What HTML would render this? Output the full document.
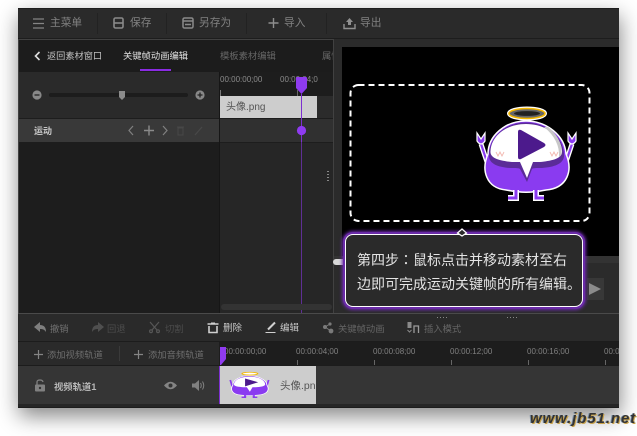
<!DOCTYPE html>
<html><head><meta charset="utf-8"><style>
html,body{margin:0;padding:0;background:#fff}
#p{position:relative;width:637px;height:436px;overflow:hidden;background:#fff;font-family:"Liberation Sans","Noto Sans CJK SC",sans-serif}
#p div,#p span.a{position:absolute}
.t{position:absolute;white-space:nowrap;line-height:12px;font-size:9.3px;color:#8a8a8a}
.tb{font-size:10.7px;color:#828282;top:17px}
.bt{top:323px;font-size:9.3px}
svg{position:absolute;overflow:visible}
#c{left:0;top:0;width:637px;height:436px;filter:blur(.3px)}
</style></head><body><div id="p">
<div style="left:18px;top:8px;width:601px;height:400px;background:#2b2b2b;box-shadow:1px 8px 20px rgba(0,0,0,.48)"></div>
<div id="c">
<!-- top toolbar -->
<div style="left:18px;top:8px;width:601px;height:31px;background:#2a2a2a;border-top:1px solid #1e1e1e;box-sizing:border-box"></div>
<div style="left:18px;top:38px;width:601px;height:1px;background:#1d1d1d"></div>
<div style="left:97px;top:13px;width:1px;height:21px;background:#222"></div>
<div style="left:166px;top:13px;width:1px;height:21px;background:#222"></div>
<div style="left:246px;top:13px;width:1px;height:21px;background:#222"></div>
<div style="left:326px;top:13px;width:1px;height:21px;background:#222"></div>
<svg style="left:33px;top:18px" width="12" height="11" stroke="#858585" stroke-width="1.3" fill="none"><path d="M0 1H11M0 5.500H11M0 10H11"/></svg>
<span class="t tb" style="left:50px">主菜单</span>
<svg style="left:113px;top:17px" width="12" height="13" stroke="#8a8a8a" stroke-width="1.6" fill="none"><rect x="1" y="1" width="9" height="10" rx="1.500"/><path d="M1 6H10"/></svg>
<span class="t tb" style="left:130px">保存</span>
<svg style="left:182px;top:17px" width="13" height="13" stroke="#8a8a8a" stroke-width="1.500" fill="none"><rect x="1" y="1" width="10" height="10" rx="1.500"/><path d="M1 4H11M3 7.500H9"/></svg>
<span class="t tb" style="left:199px">另存为</span>
<svg style="left:268px;top:18px" width="11" height="11" stroke="#8e8e8e" stroke-width="1.400" fill="none"><path d="M5.500 0V10M0.500 5H10.500"/></svg>
<span class="t tb" style="left:284px">导入</span>
<svg style="left:343px;top:17px" width="13" height="13" fill="#909090"><path d="M6.500 1L10 5H8V8H5V5H3Z"/><path d="M1 7V11.500H12V7" fill="none" stroke="#909090" stroke-width="1.400"/></svg>
<span class="t tb" style="left:360px">导出</span>
<!-- left panel -->
<div style="left:18px;top:39px;width:316px;height:275px;background:#252525;border:1px solid #414141;box-sizing:border-box"></div>
<div style="left:19px;top:40px;width:314px;height:32px;background:#1c1c1c"></div>
<svg style="left:34px;top:51px" width="7" height="10" stroke="#dcdcdc" stroke-width="1.600" fill="none"><path d="M5.500 1L1.500 5L5.500 9"/></svg>
<span class="t" style="left:47px;top:50px;color:#c4c4c4;font-size:9.200px">返回素材窗口</span>
<span class="t" style="left:123px;top:50px;color:#e0e0e0">关键帧动画编辑</span>
<div style="left:140px;top:69px;width:31px;height:2px;background:#8a2be2"></div>
<span class="t" style="left:220px;top:50px;color:#666">模板素材编辑</span>
<span class="t" style="left:322px;top:50px;color:#666;width:11px;overflow:hidden">属性</span>
<!-- slider -->
<div style="left:19px;top:72px;width:201px;height:46px;background:#2a2a2a"></div>
<div style="left:49px;top:93px;width:139px;height:4px;background:#1c1c1c;border-radius:2px"></div>
<svg style="left:32px;top:90px" width="10" height="10"><circle cx="5" cy="5" r="4.600" fill="#888"/><path d="M2.500 5H7.500" stroke="#222" stroke-width="1.300"/></svg>
<svg style="left:195px;top:90px" width="10" height="10"><circle cx="5" cy="5" r="4.600" fill="#888"/><path d="M2.500 5H7.500M5 2.500V7.500" stroke="#222" stroke-width="1.300"/></svg>
<svg style="left:119px;top:91px" width="6" height="9"><path d="M0 0H6V6L3 9L0 6Z" fill="#8b8b8b"/></svg>
<!-- motion row -->
<div style="left:19px;top:119px;width:201px;height:23px;background:#393939"></div>
<div style="left:19px;top:118px;width:314px;height:1px;background:#1d1d1d"></div>
<div style="left:19px;top:142px;width:314px;height:1px;background:#1d1d1d"></div>
<span class="t" style="left:34px;top:125px;color:#c8c8c8;font-weight:bold;font-size:9px">运动</span>
<svg style="left:128px;top:125px" width="80" height="11" fill="none"><path d="M5 1L1 5.500L5 10" stroke="#808080" stroke-width="1.200"/><path d="M16 5.500H26M21 .5V10.500" stroke="#8a8a8a" stroke-width="1.400"/><path d="M35 1L39 5.500L35 10" stroke="#808080" stroke-width="1.200"/><path d="M50 3H55V10H50ZM49 2H56" stroke="#484848" stroke-width="1"/><path d="M67 10L74 2" stroke="#484848" stroke-width="1.200"/></svg>
<div style="left:19px;top:143px;width:201px;height:170px;background:#1d1d1d"></div>
<!-- keyframe timeline -->
<div style="left:220px;top:72px;width:113px;height:24px;background:#1d1d1d"></div>
<div style="left:220px;top:96px;width:113px;height:22px;background:#2b2b2b"></div>
<div style="left:220px;top:119px;width:113px;height:23px;background:#303030"></div>
<div style="left:220px;top:143px;width:113px;height:170px;background:#262626"></div>
<div style="left:219px;top:72px;width:1px;height:241px;background:#161616"></div>
<span class="t" style="left:220px;top:74px;font-size:8px;color:#8a8a8a;width:113px;overflow:hidden;height:12px">00:00:00;00&nbsp;&nbsp;&nbsp;&nbsp;&nbsp;&nbsp;&nbsp;&nbsp;00:00:04;0</span>
<div style="left:220px;top:90px;width:1px;height:6px;background:#777"></div>
<div style="left:297px;top:90px;width:1px;height:6px;background:#666"></div>
<div style="left:220px;top:96px;width:97px;height:22px;background:#cdcdcd"></div>
<span class="t" style="left:226px;top:102px;color:#555;font-size:10px">头像.png</span>
<div style="left:301px;top:94px;width:1px;height:219px;background:#7d2fd0"></div>
<div style="left:301px;top:142px;width:1px;height:171px;background:#5f2f94"></div>
<svg style="left:295px;top:77px" width="13" height="18"><path d="M1 1Q1 0 2 0H11Q12 0 12 1V11L6.500 17L1 11Z" fill="#8f3bf0"/></svg>
<svg style="left:296px;top:125px" width="11" height="11"><circle cx="5.500" cy="5.500" r="4.600" fill="#8f3bf0"/></svg>
<div style="left:221px;top:304px;width:111px;height:6px;background:#333;border-radius:3px"></div>
<div style="left:327px;top:171px;width:2px;height:12px;background:repeating-linear-gradient(#888 0 1px,transparent 1px 3px)"></div>
<!-- preview -->
<div style="left:334px;top:39px;width:285px;height:275px;background:#2b2b2b"></div>
<div style="left:342px;top:47px;width:277px;height:209px;background:#000"></div>
<div style="left:334px;top:256px;width:285px;height:7px;background:#333"></div>
<svg style="left:342px;top:47px" width="277" height="200" fill="none"><rect x="8.500" y="38" width="239" height="136" rx="8" stroke="#fff" stroke-width="2" stroke-dasharray="6 4"/></svg>
<!-- mascot -->
<svg style="left:470px;top:104px" width="110" height="100" viewBox="0 0 110 100">
<ellipse cx="57" cy="9.500" rx="18" ry="5" fill="none" stroke="#fff" stroke-width="4"/>
<ellipse cx="57" cy="9.500" rx="18" ry="5" fill="#666" stroke="#f5b800" stroke-width="1.600"/>
<ellipse cx="57" cy="9.500" rx="13" ry="2.400" fill="#222"/>
<path d="M11 40L17 58M102 40L96 58" stroke="#fff" stroke-width="5"/>
<path d="M11 40L17 58M102 40L96 58" stroke="#8a3bf0" stroke-width="2.200"/>
<path d="M7 29L7 37Q11 43 15 37L15 29L11 35Z" fill="#8a3bf0" stroke="#fff" stroke-width="1.200"/>
<path d="M98 29L98 37Q102 43 106 37L106 29L102 35Z" fill="#8a3bf0" stroke="#fff" stroke-width="1.200"/>
<path d="M18 50C18 32 35 17 56 17C77 17 95 32 96 50C103 66 98 84 76 86C60 89 52 89 36 86C16 84 11 66 18 50Z" fill="#8a3bf0" stroke="#fff" stroke-width="1.500"/>
<path d="M19 50C20 32 36 18.500 56 18.500C76 18.500 93 32 94 50C95 60 84 63 72 64C66 64 63 64 62 65L57 78L50 65C49 64 46 64 40 64C28 63 18 60 19 50Z" fill="#5b2c98"/>
<path d="M20.500 47C21.500 31 37 20 56 20C75 20 91 31 92 47C93 55 80 57 70 58H63L57 74L50 58H42C32 57 19.500 55 20.500 47Z" fill="#fff"/>
<path d="M78 23Q91 33 91.500 47Q92.500 51 89 53Q90 36 74 23Z" fill="#c8c8c8"/>
<path d="M48 28Q48 25 51 26L74 39Q77 41 74 43L51 55Q48 56 48 53Z" fill="#4c1a8c"/>
<path d="M26 48L28 52L30 48L32 52L34 48M80 48L82 52L84 48L86 52L88 48" stroke="#f2b8b0" stroke-width=".9" fill="none"/>
<path d="M46 86V94H38M66 86V94H74" stroke="#fff" stroke-width="6" fill="none"/>
<path d="M46 86V94H38M66 86V94H74" stroke="#8a3bf0" stroke-width="3" fill="none"/>
</svg>
<!-- control -->
<div style="left:587px;top:278px;width:17px;height:22px;background:#383838"></div>
<svg style="left:589px;top:283px" width="12" height="12"><path d="M0 0L12 6L0 12Z" fill="#8c8c8c"/></svg>
<!-- pointer -->
<div style="left:333px;top:259px;width:18px;height:6px;border-radius:3px;background:#d8d8d8"></div>
<!-- tooltip -->
<div style="left:345px;top:234px;width:238px;height:73px;background:#2a2a2a;border:1.500px solid #fff;border-radius:8px;box-sizing:border-box;box-shadow:0 0 0 2px #6a2aa8,0 0 3px 3px #6a2aa8"></div>
<svg style="left:457px;top:228px" width="10" height="8"><path d="M5 1L9.500 5L5 8L.5 5Z" fill="#2a2a2a" stroke="#fff" stroke-width="1.300"/></svg>
<span class="t" style="left:357px;top:252px;font-size:14px;line-height:16px;color:#e4e4e4">第四步<span style="font-family:'Liberation Sans','Noto Sans CJK TC',sans-serif">：</span>鼠标点击并移动素材至右</span>
<span class="t" style="left:357px;top:276px;font-size:14px;line-height:16px;color:#e4e4e4">边即可完成运动关键帧的所有编辑。</span>
<!-- bottom toolbar -->
<div style="left:18px;top:313px;width:601px;height:1px;background:#4a4a4a"></div>
<div style="left:18px;top:314px;width:601px;height:27px;background:#2a2a2a"></div>
<div style="left:437px;top:317px;width:10px;height:1px;background:repeating-linear-gradient(90deg,#888 0 1px,transparent 1px 3px)"></div>
<div style="left:507px;top:317px;width:10px;height:1px;background:repeating-linear-gradient(90deg,#888 0 1px,transparent 1px 3px)"></div>
<svg style="left:34px;top:322px" width="13" height="11"><path d="M0 5L6 0V3Q12 3 12 10Q10 6.500 6 7V10Z" fill="#7e7e7e"/></svg>
<span class="t bt" style="left:50px;color:#707070">撤销</span>
<svg style="left:91px;top:322px" width="13" height="11"><path d="M13 5L7 0V3Q1 3 1 10Q3 6.500 7 7V10Z" fill="#4f4f4f"/></svg>
<span class="t bt" style="left:107px;color:#4c4c4c">回退</span>
<svg style="left:149px;top:322px" width="11" height="11" stroke="#575757" stroke-width="1.200" fill="none"><path d="M1 0L8 8M10 0L3 8"/><circle cx="2" cy="9.200" r="1.400"/><circle cx="9" cy="9.200" r="1.400"/></svg>
<span class="t bt" style="left:165px;color:#4c4c4c">切割</span>
<svg style="left:207px;top:322px" width="12" height="12" stroke="#d0d0d0" fill="none"><path d="M0.500 2H11.500" stroke-width="1.500"/><path d="M2 4V10.500H10V4" stroke-width="1.600"/><path d="M4 1H8" stroke-width="1"/></svg>
<span class="t bt" style="left:223px;color:#c8c8c8;font-size:9.500px">删除</span>
<svg style="left:265px;top:321px" width="12" height="13" fill="none" stroke="#d0d0d0"><path d="M3 8.500L10 1.500" stroke-width="2"/><path d="M0.500 11.500H10.500" stroke-width="1"/></svg>
<span class="t bt" style="left:280px;color:#c8c8c8;font-size:9.500px">编辑</span>
<svg style="left:322px;top:322px" width="12" height="12" fill="#7a7a7a"><circle cx="3" cy="5" r="2"/><circle cx="8" cy="2" r="1.600"/><circle cx="9" cy="9" r="2.400"/><path d="M3 5L8 2M3 5L9 9" stroke="#7a7a7a"/></svg>
<span class="t bt" style="left:338px;color:#666">关键帧动画</span>
<svg style="left:407px;top:321px" width="13" height="13" fill="none"><rect x="0.500" y="1" width="4" height="6" fill="#8a8a8a"/><path d="M0.500 9L2.500 11L4.500 9" stroke="#8a8a8a"/><path d="M7 12V5H11.500V12" stroke="#9a9a9a" stroke-width="1.300"/></svg>
<span class="t bt" style="left:424px;color:#666">插入模式</span>
<!-- header row -->
<div style="left:18px;top:341px;width:601px;height:1px;background:#1c1c1c"></div>
<div style="left:18px;top:342px;width:201px;height:23px;background:#2a2a2a"></div>
<div style="left:219px;top:342px;width:400px;height:23px;background:#1d1d1d"></div>
<div style="left:119px;top:346px;width:1px;height:15px;background:#3a3a3a"></div>
<svg style="left:34px;top:350px" width="9" height="9" stroke="#858585" stroke-width="1.200"><path d="M4.500 0V9M0 4.500H9"/></svg>
<span class="t" style="left:47px;top:349px;color:#6e6e6e">添加视频轨道</span>
<svg style="left:134px;top:350px" width="9" height="9" stroke="#858585" stroke-width="1.200"><path d="M4.500 0V9M0 4.500H9"/></svg>
<span class="t" style="left:148px;top:349px;color:#6e6e6e">添加音频轨道</span>
<span class="t" style="left:224px;top:346px;font-size:8px;color:#808080">00:00:00;00</span>
<span class="t" style="left:296px;top:346px;font-size:8px;color:#808080">00:00:04;00</span>
<span class="t" style="left:373px;top:346px;font-size:8px;color:#808080">00:00:08;00</span>
<span class="t" style="left:450px;top:346px;font-size:8px;color:#808080">00:00:12;00</span>
<span class="t" style="left:527px;top:346px;font-size:8px;color:#808080">00:00:16;00</span>
<span class="t" style="left:604px;top:346px;font-size:8px;color:#808080;width:15px;overflow:hidden">00:00:20;00</span>
<div style="left:297px;top:360px;width:1px;height:5px;background:#666"></div>
<div style="left:374px;top:360px;width:1px;height:5px;background:#666"></div>
<div style="left:451px;top:360px;width:1px;height:5px;background:#666"></div>
<div style="left:528px;top:360px;width:1px;height:5px;background:#666"></div>
<div style="left:605px;top:360px;width:1px;height:5px;background:#666"></div>
<svg style="left:220px;top:347px" width="6" height="18"><path d="M0 0H6V12L1 18H0Z" fill="#8f3bf0"/></svg>
<!-- track -->
<div style="left:18px;top:365px;width:601px;height:1px;background:#1c1c1c"></div>
<div style="left:18px;top:366px;width:601px;height:38px;background:#353535"></div>
<div style="left:219px;top:366px;width:1px;height:42px;background:#7d2fd0"></div>
<div style="left:18px;top:404px;width:601px;height:4px;background:#262626;border-bottom:1px solid #1c1c1c;box-sizing:border-box"></div>
<svg style="left:34px;top:379px" width="12" height="13"><rect x="1" y="5.500" width="10" height="7" rx="1" fill="#808080"/><path d="M3 5.500V3Q3 1 6 1Q8.500 1 9 3" fill="none" stroke="#808080" stroke-width="1.300"/><circle cx="6" cy="9" r="1.200" fill="#333"/></svg>
<span class="t" style="left:54px;top:381px;color:#b8b8b8;font-weight:bold">视频轨道1</span>
<svg style="left:164px;top:381px" width="13" height="9"><path d="M0 4.500Q6.500 -3 13 4.500Q6.500 12 0 4.500Z" fill="#848484"/><circle cx="6.500" cy="4.500" r="2" fill="#333"/></svg>
<svg style="left:192px;top:380px" width="13" height="11" fill="none"><path d="M0 3.500H3L7 0V11L3 7.500H0Z" fill="#808080"/><path d="M8.500 3Q10 5.500 8.500 8M10.500 1.500Q13 5.500 10.500 9.500" stroke="#808080"/></svg>
<div style="left:220px;top:366px;width:96px;height:38px;background:#cdcdcd"></div>
<svg style="left:225px;top:371px" width="48" height="28" viewBox="0 0 110 100" preserveAspectRatio="none">
<ellipse cx="57" cy="9.500" rx="18" ry="5" fill="#fff" stroke="#f5b800" stroke-width="3"/>
<path d="M12 32L18 63M100 32L94 63" stroke="#8a3bf0" stroke-width="4"/>
<path d="M18 50C18 32 35 17 56 17C77 17 95 32 96 50C103 66 98 84 76 86C60 89 52 89 36 86C16 84 11 66 18 50Z" fill="#8a3bf0" stroke="#fff" stroke-width="2"/>
<path d="M20.500 47C21.500 31 37 20 56 20C75 20 91 31 92 47C93 55 80 57 70 58H63L57 74L50 58H42C32 57 19.500 55 20.500 47Z" fill="#fff"/>
<path d="M46 27L76 40L46 55Z" fill="#4c1a8c"/>
<path d="M46 86V94H38M66 86V94H74" stroke="#8a3bf0" stroke-width="5" fill="none"/>
</svg>
<span class="t" style="left:280px;top:380px;color:#555;font-size:10.500px;width:36px;overflow:hidden">头像.png</span>
</div>
<!-- watermark -->
<span class="t" style="left:530px;top:411px;font:italic bold 15px/16px 'Liberation Sans',sans-serif;color:#333;letter-spacing:.9px;text-shadow:1px 1px 0 #c8a24a,-1px 0 0 #7d93a8">www.jb51.net</span>
</div></body></html>
